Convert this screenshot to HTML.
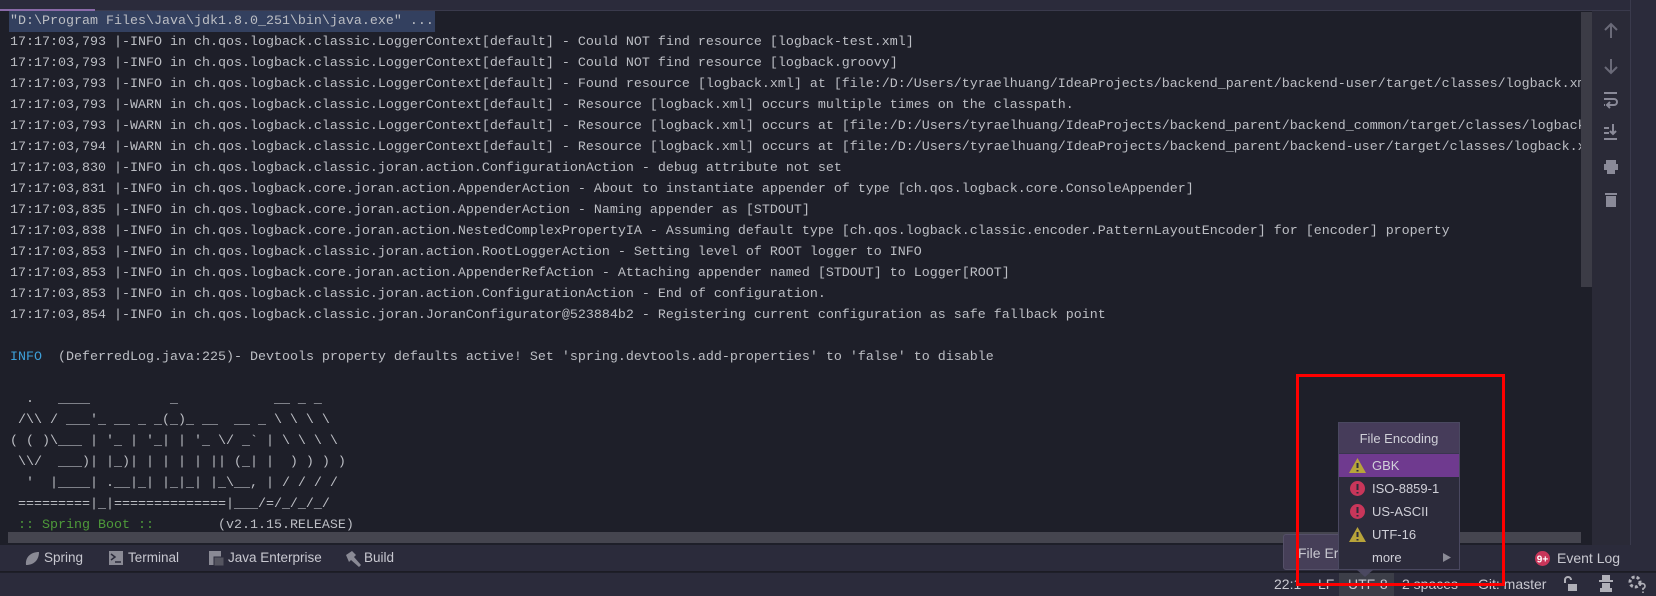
<!DOCTYPE html>
<html><head><meta charset="utf-8"><style>
*{margin:0;padding:0;box-sizing:border-box}
body{width:1656px;height:596px;background:#1e1f29;position:relative;overflow:hidden;font-family:"Liberation Sans",sans-serif}
#top{position:absolute;left:0;top:0;width:1656px;height:10px;background:#2b2b3b}
#topul{position:absolute;left:0;top:9px;width:95px;height:2px;background:#8a6aa8}
#topline{position:absolute;left:95px;top:10px;width:1535px;height:1px;background:#3a3a4c}
#cons{position:absolute;left:10px;top:11px;font-family:"Liberation Mono",monospace;font-size:13.33px;color:#bcbec4}
#cons div{height:21px;line-height:21px;white-space:pre}
.hl{background:#33405f;display:inline-block;padding:0 1px;margin-left:-1px}
.info{color:#3d9fd8}.sp{color:#4e9a3a}
#hs{position:absolute;left:8px;top:532px;width:1573px;height:11px;background:#45454f}
#vs{position:absolute;left:1581px;top:12px;width:11px;height:275px;background:#3c3c46}
#rt{position:absolute;left:1592px;top:11px;width:38px;height:534px;background:#2a2a37}
#rb{position:absolute;left:1630px;top:0;width:1px;height:545px;background:#3a3a4c}
#rr{position:absolute;left:1631px;top:0;width:25px;height:545px;background:#2b2b3b}
#tb{position:absolute;left:0;top:545px;width:1656px;height:27px;background:#2b2b3b;border-bottom:1px solid #1c1c24}
#sb{position:absolute;left:0;top:573px;width:1656px;height:23px;background:#2b2b3b}
.t{position:absolute;color:#c8c8d0;font-size:13px;line-height:16px;white-space:nowrap}
.n{font-size:13.5px}
.ic{position:absolute}
#pop{position:absolute;left:1338px;top:422px;width:122px;height:148px;background:#2c2b3b;border:1px solid #4a4860}
#ph{height:31px;background:#463c5a;border-bottom:1px solid #3a3550;color:#d0d0d8;font-size:13px;text-align:center;line-height:31px}
.row{height:23px;line-height:23px;color:#d0d0d8;font-size:13px;padding-left:33px;position:relative}
.sel{background:#6f3a8f}
#red{position:absolute;left:1296px;top:374px;width:209px;height:212px;border:3px solid #ff0000}
</style></head><body>
<div id="top"></div><div id="topul"></div><div id="topline"></div>
<div id="cons"><div><span class="hl">"D:\Program Files\Java\jdk1.8.0_251\bin\java.exe" ...</span></div><div>17:17:03,793 |-INFO in ch.qos.logback.classic.LoggerContext[default] - Could NOT find resource [logback-test.xml]</div><div>17:17:03,793 |-INFO in ch.qos.logback.classic.LoggerContext[default] - Could NOT find resource [logback.groovy]</div><div>17:17:03,793 |-INFO in ch.qos.logback.classic.LoggerContext[default] - Found resource [logback.xml] at [file:/D:/Users/tyraelhuang/IdeaProjects/backend_parent/backend-user/target/classes/logback.xml</div><div>17:17:03,793 |-WARN in ch.qos.logback.classic.LoggerContext[default] - Resource [logback.xml] occurs multiple times on the classpath.</div><div>17:17:03,793 |-WARN in ch.qos.logback.classic.LoggerContext[default] - Resource [logback.xml] occurs at [file:/D:/Users/tyraelhuang/IdeaProjects/backend_parent/backend_common/target/classes/logback.</div><div>17:17:03,794 |-WARN in ch.qos.logback.classic.LoggerContext[default] - Resource [logback.xml] occurs at [file:/D:/Users/tyraelhuang/IdeaProjects/backend_parent/backend-user/target/classes/logback.xm</div><div>17:17:03,830 |-INFO in ch.qos.logback.classic.joran.action.ConfigurationAction - debug attribute not set</div><div>17:17:03,831 |-INFO in ch.qos.logback.core.joran.action.AppenderAction - About to instantiate appender of type [ch.qos.logback.core.ConsoleAppender]</div><div>17:17:03,835 |-INFO in ch.qos.logback.core.joran.action.AppenderAction - Naming appender as [STDOUT]</div><div>17:17:03,838 |-INFO in ch.qos.logback.core.joran.action.NestedComplexPropertyIA - Assuming default type [ch.qos.logback.classic.encoder.PatternLayoutEncoder] for [encoder] property</div><div>17:17:03,853 |-INFO in ch.qos.logback.classic.joran.action.RootLoggerAction - Setting level of ROOT logger to INFO</div><div>17:17:03,853 |-INFO in ch.qos.logback.core.joran.action.AppenderRefAction - Attaching appender named [STDOUT] to Logger[ROOT]</div><div>17:17:03,853 |-INFO in ch.qos.logback.classic.joran.action.ConfigurationAction - End of configuration.</div><div>17:17:03,854 |-INFO in ch.qos.logback.classic.joran.JoranConfigurator@523884b2 - Registering current configuration as safe fallback point</div><div> </div><div><span class="info">INFO</span>  (DeferredLog.java:225)- Devtools property defaults active! Set 'spring.devtools.add-properties' to 'false' to disable</div><div> </div><div>  .   ____          _            __ _ _</div><div> /\\ / ___'_ __ _ _(_)_ __  __ _ \ \ \ \</div><div>( ( )\___ | '_ | '_| | '_ \/ _` | \ \ \ \</div><div> \\/  ___)| |_)| | | | | || (_| |  ) ) ) )</div><div>  '  |____| .__|_| |_|_| |_\__, | / / / /</div><div> =========|_|==============|___/=/_/_/_/</div><div><span class="sp"> :: Spring Boot ::</span>        (v2.1.15.RELEASE)</div></div>
<div id="hs"></div><div id="vs"></div><div id="rt"></div><div id="rb"></div><div id="rr"></div>
<svg class="ic" style="left:1601px;top:20px" width="20" height="220" viewBox="0 0 20 220" fill="none" stroke="#6a6a78" stroke-width="2">
<path d="M10 4v14M4 10l6-6 6 6"/>
<path d="M10 39v14M4 47l6 6 6-6" />
<path d="M3 73h13M3 79h10a3 3 0 0 1 0 6h-6M9 82l-3 3 3 3M3 85h1" stroke="#8a8a98"/>
<path d="M3 108h5M3 113h5M3 119h13M12 104v10M9 111l3 3 3-3" stroke="#8a8a98"/>
<rect x="5" y="140" width="10" height="4" fill="#8a8a98" stroke="none"/><rect x="3" y="144" width="14" height="6" fill="#8a8a98" stroke="none"/><rect x="6" y="150" width="8" height="4" fill="#8a8a98" stroke="none"/>
<rect x="4" y="173" width="12" height="2" fill="#8a8a98" stroke="none"/><rect x="5" y="176" width="10" height="11" fill="#8a8a98" stroke="none"/>
</svg>
<div id="tb"></div><div id="sb"></div>
<svg class="ic" style="left:25px;top:551px" width="15" height="15"><path d="M1 14C0 6 6 1 14 1 14 9 9 14 1 14z" fill="#8a8a95"/></svg>
<div class="t n" style="left:44px;top:550px">Spring</div>
<svg class="ic" style="left:109px;top:551px" width="14" height="14"><rect width="14" height="14" fill="#8a8a95"/><path d="M2 3l4 3-4 3M6 11h6" stroke="#2b2b3b" fill="none" stroke-width="1.5"/></svg>
<div class="t n" style="left:128px;top:550px">Terminal</div>
<svg class="ic" style="left:209px;top:551px" width="16" height="16"><rect width="12" height="14" fill="#8a8a95"/><rect x="5" y="6" width="10" height="9" fill="#555560" stroke="#2b2b3b"/></svg>
<div class="t n" style="left:228px;top:550px">Java Enterprise</div>
<svg class="ic" style="left:344px;top:550px" width="17" height="17"><path d="M2 5l6-4 4 4-2 2 7 8-2 2-8-7-2 2z" fill="#8a8a95"/></svg>
<div class="t n" style="left:364px;top:550px">Build</div>
<div style="position:absolute;left:1283px;top:534px;width:70px;height:36px;background:#463f58;border:1px solid #555068;border-radius:3px"></div>
<div class="t" style="left:1298px;top:545px;font-size:14px">File Er</div>
<div id="pop">
<div id="ph">File Encoding</div>
<div class="row sel"><svg style="position:absolute;left:10px;top:4px" width="17" height="15"><path d="M8.5 0L17 15H0z" fill="#b8a43a"/><path d="M8.5 5v5M8.5 12v1.5" stroke="#2c2b3b" stroke-width="2"/></svg>GBK</div>
<div class="row"><svg style="position:absolute;left:11px;top:4px" width="15" height="15"><circle cx="7.5" cy="7.5" r="7.5" fill="#c8365a"/><path d="M7.5 3v6M7.5 11v1.5" stroke="#2c2b3b" stroke-width="2"/></svg>ISO-8859-1</div>
<div class="row"><svg style="position:absolute;left:11px;top:4px" width="15" height="15"><circle cx="7.5" cy="7.5" r="7.5" fill="#c8365a"/><path d="M7.5 3v6M7.5 11v1.5" stroke="#2c2b3b" stroke-width="2"/></svg>US-ASCII</div>
<div class="row"><svg style="position:absolute;left:10px;top:4px" width="17" height="15"><path d="M8.5 0L17 15H0z" fill="#b8a43a"/><path d="M8.5 5v5M8.5 12v1.5" stroke="#2c2b3b" stroke-width="2"/></svg>UTF-16</div>
<div class="row">more<svg style="position:absolute;left:104px;top:7px" width="8" height="9"><path d="M0 0l8 4.5L0 9z" fill="#8a8a95"/></svg></div>
</div>
<div style="position:absolute;left:1339px;top:573px;width:55px;height:23px;background:#3c3e48"></div>
<svg class="ic" style="left:1357px;top:570px" width="16" height="7"><path d="M0 0h16L8 7z" fill="#4a4860"/></svg>
<div class="t" style="left:1274px;top:576px;font-size:14px">22:1</div>
<div class="t" style="left:1318px;top:576px;font-size:14px">LF</div>
<div class="t" style="left:1348px;top:576px;font-size:14px">UTF-8</div>
<div class="t" style="left:1402px;top:576px;font-size:14px">2 spaces</div>
<div class="t" style="left:1478px;top:576px;font-size:14px">Git: master</div>
<svg class="ic" style="left:1562px;top:576px" width="16" height="16"><path d="M3 7V4a3 3 0 0 1 6 0" stroke="#b0b0b8" stroke-width="2" fill="none"/><rect x="6" y="8" width="9" height="7" fill="#b0b0b8"/></svg>
<svg class="ic" style="left:1598px;top:575px" width="16" height="17"><rect x="4" y="0" width="8" height="5" fill="#b0b0b8"/><rect x="1" y="5" width="14" height="2" fill="#b0b0b8"/><rect x="4" y="8" width="8" height="5" fill="#b0b0b8"/><rect x="2" y="13" width="12" height="4" fill="#b0b0b8"/></svg>
<svg class="ic" style="left:1628px;top:575px" width="18" height="18"><circle cx="7" cy="7" r="5" fill="none" stroke="#b0b0b8" stroke-width="3" stroke-dasharray="3 2"/><path d="M12 11a2.5 2.5 0 1 1 3 2.5v1.5M15 16.5v1.5" stroke="#b0b0b8" stroke-width="1.6" fill="none"/></svg>
<svg class="ic" style="left:1535px;top:551px" width="15" height="15"><circle cx="7.5" cy="7.5" r="7.5" fill="#c8365a"/><text x="7.5" y="11.5" font-size="10" font-weight="bold" fill="#fff" text-anchor="middle" font-family="Liberation Sans">9+</text></svg>
<div class="t" style="left:1557px;top:550px;font-size:14px">Event Log</div>
<div id="red"></div>
</body></html>
